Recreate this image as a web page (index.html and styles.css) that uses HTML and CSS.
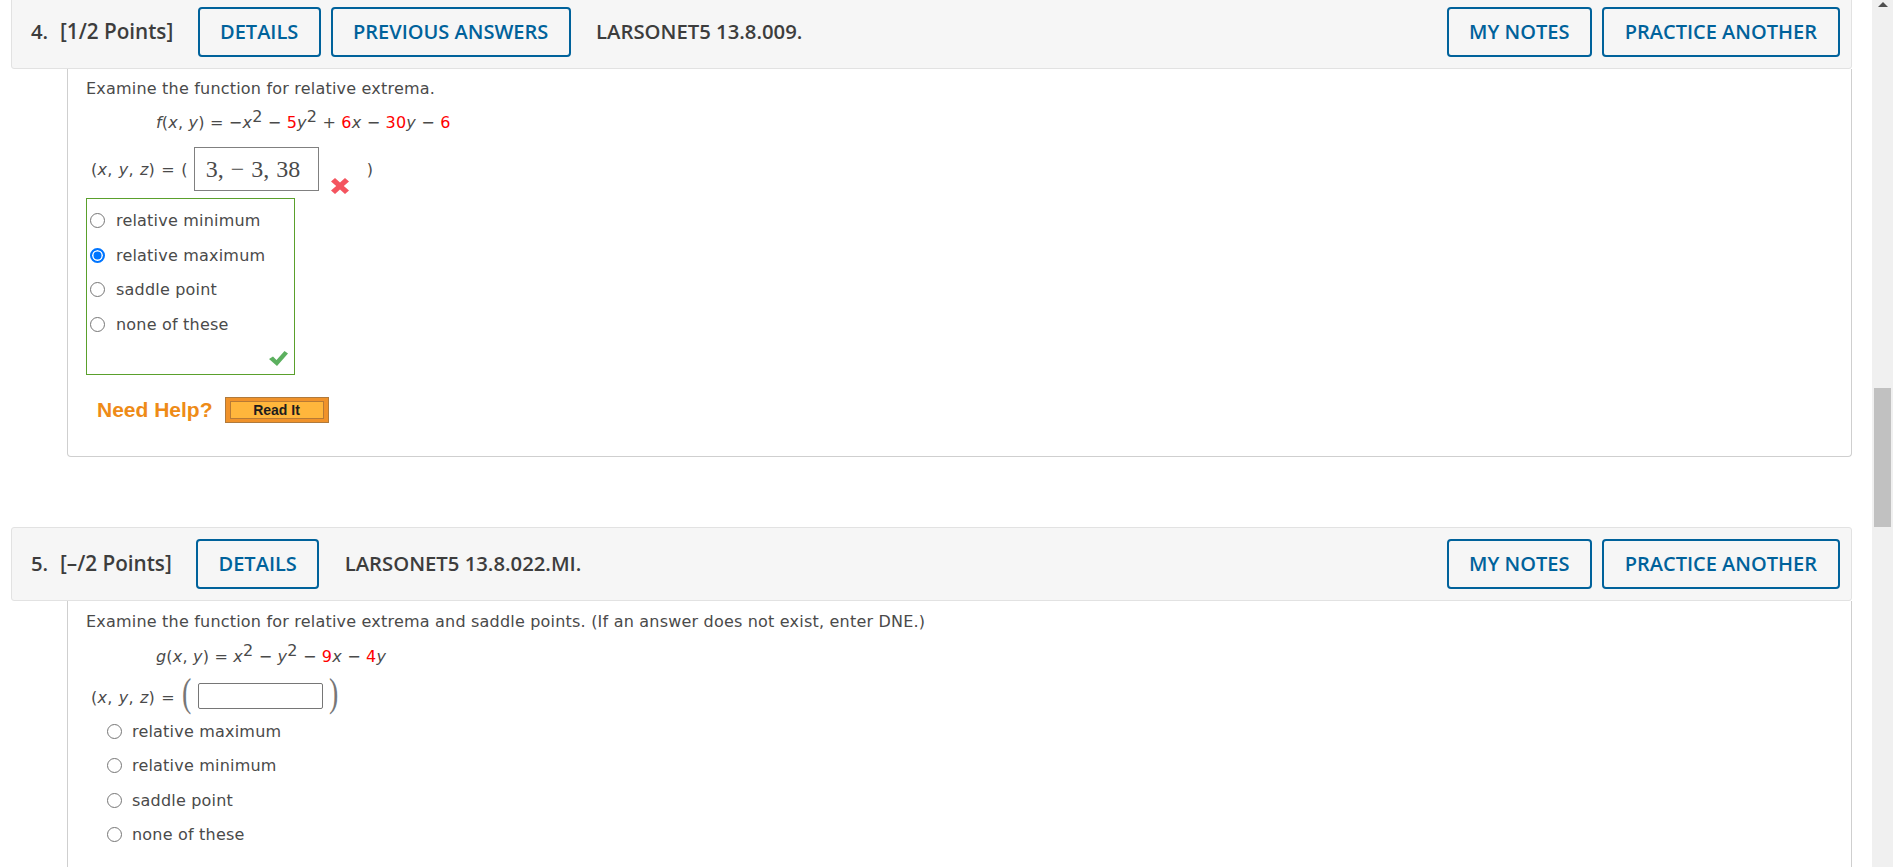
FILE: index.html
```html
<!DOCTYPE html>
<html lang="en">
<head>
<meta charset="utf-8">
<title>Assignment</title>
<link rel="stylesheet" href="styles.css">
</head>
<body>
<div class="app">
  <main class="page">
    <section class="question q4">
      <header class="qhead">
        <span class="qnum">4.</span>
        <span class="qpts">[1/2 Points]</span>
        <a class="btn">DETAILS</a>
        <a class="btn">PREVIOUS ANSWERS</a>
        <span class="qcode">LARSONET5 13.8.009.</span>
        <span class="spacer"></span>
        <a class="btn">MY NOTES</a>
        <a class="btn">PRACTICE ANOTHER</a>
      </header>
      <div class="qbody qbody-4">
        <p class="prompt">Examine the function for relative extrema.</p>
        <p class="formula"><i>f</i>(<i>x</i>, <i>y</i>) = −<i>x</i><sup>2</sup> − <b>5</b><i>y</i><sup>2</sup> + <b>6</b><i>x</i> − <b>30</b><i>y</i> − <b>6</b></p>
        <div class="answer-row">
          <span class="tuple">(<i>x</i>, <i>y</i>, <i>z</i>) = (</span>
          <span class="mathbox">3, − 3, 38</span>
          <svg class="cross" viewBox="0 0 18 16" width="18" height="16"><path d="M4 0 L9 4.5 L14 0 L18 3.5 L12.8 8 L18 12.5 L14 16 L9 11.5 L4 16 L0 12.5 L5.2 8 L0 3.5 Z"/></svg>
          <span class="close-paren">)</span>
        </div>
        <div class="choices-correct">
          <label class="choice"><span class="radio"></span>relative minimum</label>
          <label class="choice"><span class="radio on"></span>relative maximum</label>
          <label class="choice"><span class="radio"></span>saddle point</label>
          <label class="choice"><span class="radio"></span>none of these</label>
          <svg class="check" viewBox="0 0 19 15" width="19" height="15"><path d="M0 8 L4 5.5 L7.5 9 L15.5 0 L19 2.5 L8 15 Z"/></svg>
        </div>
        <div class="help">
          <span class="help-label">Need Help?</span>
          <a class="readit"><span>Read It</span></a>
        </div>
      </div>
    </section>
    <section class="question q5">
      <header class="qhead">
        <span class="qnum">5.</span>
        <span class="qpts">[–/2 Points]</span>
        <a class="btn">DETAILS</a>
        <span class="qcode">LARSONET5 13.8.022.MI.</span>
        <span class="spacer"></span>
        <a class="btn">MY NOTES</a>
        <a class="btn">PRACTICE ANOTHER</a>
      </header>
      <div class="qbody qbody-5">
        <p class="prompt">Examine the function for relative extrema and saddle points. (If an answer does not exist, enter DNE.)</p>
        <p class="formula"><i>g</i>(<i>x</i>, <i>y</i>) = <i>x</i><sup>2</sup> − <i>y</i><sup>2</sup> − <b>9</b><i>x</i> − <b>4</b><i>y</i></p>
        <div class="answer-row row5">
          <span class="tuple">(<i>x</i>, <i>y</i>, <i>z</i>) =</span>
          <span class="bigparen">(</span>
          <span class="blank"></span>
          <span class="bigparen">)</span>
        </div>
        <div class="choices">
          <label class="choice"><span class="radio"></span>relative maximum</label>
          <label class="choice"><span class="radio"></span>relative minimum</label>
          <label class="choice"><span class="radio"></span>saddle point</label>
          <label class="choice"><span class="radio"></span>none of these</label>
        </div>
      </div>
    </section>
  </main>
  <aside class="scrollbar">
    <span class="arrow-up"></span>
    <span class="thumb"></span>
  </aside>
</div>
</body>
</html>
```
FILE: styles.css
```css
* { box-sizing: border-box; }
html, body { margin: 0; height: 867px; overflow: hidden; background: #fff; }
body { font-family: "DejaVu Sans", sans-serif; font-size: 16px; letter-spacing: .2px; color: #4a4a4a; }
.app { display: flex; height: 867px; overflow: hidden; }
.page { flex: 1; min-width: 0; padding: 0 20px 0 11px; margin-top: -5px; }
.question { display: flex; flex-direction: column; }
.q5 { margin-top: 70px; }
.qhead {
  display: flex; align-items: center; height: 74px; padding: 0 11px 0 19px;
  background: #f6f6f6; border: 1px solid #e2e2e2; border-radius: 3px;
  font-family: "Open Sans", sans-serif; font-size: 20.3px; letter-spacing: 0; font-weight: 600; color: #3d3d3d;
}
.qnum { width: 29px; padding-bottom: 2px; }
.qpts { margin-right: 24.5px; padding-bottom: 2px; font-size: 20.7px; }
.btn {
  display: flex; align-items: center; justify-content: center; height: 50px; padding: 0 20.3px 2px;
  border: 2px solid #00629b; border-radius: 4px; color: #00629b; margin-right: 10px; font-size: 20px;
}
.qcode { margin-left: 15.5px; padding-bottom: 2px; }
.spacer { flex: 1; }
.qhead .btn:last-child { margin-right: 0; padding: 0 21px 2px; }
.qbody { margin-left: 56px; background: #fff; border: 1px solid #cfcfcf; border-top: 0; border-radius: 0 0 4px 4px; padding: 0 0 0 18px; }
.qbody-4 { height: 388px; }
.qbody-5 { height: 300px; border-bottom: 0; }
.prompt { margin: 0; padding-top: 9px; line-height: 22px; }
.formula { margin: 0; padding: 12px 0 0 70px; line-height: 22px; }
.qbody-5 .prompt { padding-top: 10px; }
.qbody-5 .formula { padding-top: 13px; }
.formula b { font-weight: 400; color: #f00; }
sup { font-size: 16px; line-height: 0; vertical-align: 6px; }
.answer-row { display: flex; align-items: center; height: 44px; margin-top: 13px; padding-left: 5px; }
.tuple { margin-right: 6px; word-spacing: 1px; }
.mathbox {
  width: 125px; height: 44px; border: 1px solid #808080; display: flex; align-items: center; padding-left: 11px;
  font-family: "Liberation Serif", serif; font-size: 24px; letter-spacing: 0; color: #4a4a4a; word-spacing: 1px;
}
.cross { flex: none; fill: #f4545f; margin: 33px 0 0 12px; }
.close-paren { margin-left: 18px; }
.choices-correct {
  position: relative; width: 209px; height: 177px; margin-top: 7px; padding: 4.5px 0 0 3px;
  border: 1px solid #5aa02c;
}
.choice { display: flex; align-items: center; height: 34.5px; }
.radio { flex: none; width: 15px; height: 15px; margin-right: 11px; border: 1.5px solid #767676; border-radius: 50%; background: #fff; }
.radio.on { border: 2px solid #0075ff; box-shadow: inset 0 0 0 1.5px #fff; background: #0075ff; }
.check { position: absolute; right: 6px; bottom: 8px; fill: #5cb05f; }
.help { display: flex; align-items: center; margin: 22px 0 0 11px; height: 26px; letter-spacing: 0; }
.help-label { font-family: "Liberation Sans", sans-serif; font-weight: 700; font-size: 21px; color: #ee8b17; margin-right: 12px; }
.readit {
  display: flex; width: 104px; height: 26px; padding: 3px 4px 3px 4px;
  border: 1px solid #b07a3c; background: #f0922a;
}
.readit span {
  flex: 1; display: flex; align-items: center; justify-content: center;
  border: 1px solid #b87a35; background: #ffb63c;
  font-family: "Liberation Sans", sans-serif; font-weight: 700; font-size: 14px; color: #1c1c1c;
}
.row5 { height: 32px; margin-top: 13px; }
.row5 .tuple { margin-right: 5px; }
.bigparen { font-family: "Liberation Serif", serif; font-size: 40px; font-weight: 400; line-height: 32px; letter-spacing: 0; color: #777; margin-top: -8px; transform: scaleX(.7); }
.blank { width: 125px; height: 26px; margin: 0 4px 2px 5px; border: 1px solid #767676; border-radius: 2px; background: #fff; }
.choices { margin: 1px 0 0 21px; }
.choices .radio { margin-right: 10px; }
.scrollbar { position: relative; flex: none; width: 21px; height: 867px; background: #f0f0f0; display: flex; flex-direction: column; align-items: center; }
.arrow-up { margin-top: 2px; width: 0; height: 0; border: 5px solid transparent; border-top: 0; border-bottom: 5px solid #505050; }
.thumb { width: 17px; height: 139px; margin-top: 381px; background: #c1c1c1; }
```
